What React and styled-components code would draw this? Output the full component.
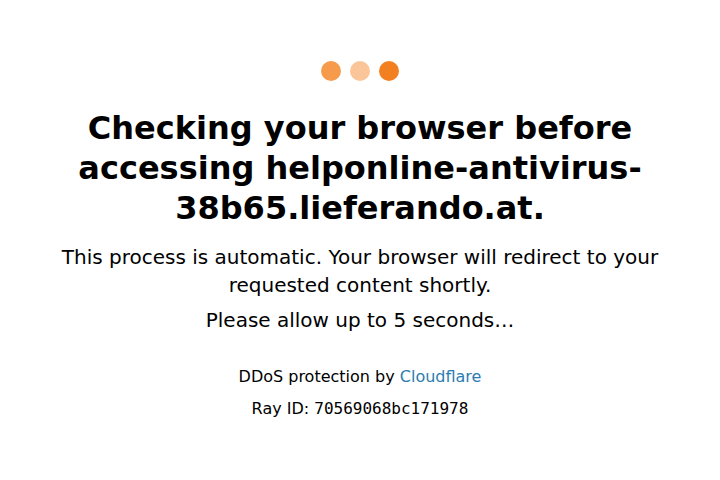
import React from 'react'
import styled, { createGlobalStyle } from 'styled-components'

const GlobalStyle = createGlobalStyle`
  html, body {
    margin: 0;
    padding: 0;
    background: #fff;
    font-family: "DejaVu Sans", sans-serif;
    color: #000;
  }
`

const Page = styled.main`
  width: 720px;
  display: flex;
  flex-direction: column;
  align-items: center;
  text-align: center;
  padding-top: 61px;
`

const Dots = styled.div`
  display: flex;
  gap: 9px;
  margin-bottom: 27px;
`

const Dot = styled.span`
  width: 20px;
  height: 20px;
  border-radius: 50%;
  background: ${p => p.color};
`

const Title = styled.h1`
  margin: 0;
  font-size: 32px;
  line-height: 40px;
  font-weight: bold;
  padding: 0 60px;
`

const Text = styled.p`
  margin: ${p => p.mt || 0}px 0 0;
  font-size: 20px;
  line-height: 28px;
  padding: 0 55px;
`

const Footer = styled.div`
  margin-top: 33px;
  font-size: 16px;
  line-height: 20px;
  display: flex;
  flex-direction: column;
  gap: 12px;
`

const Link = styled.a`
  color: #2c7cb0;
  text-decoration: none;
`

const Code = styled.code`
  font-family: "DejaVu Sans Mono", monospace;
  font-size: 16px;
`

export default function App() {
  return (
    <>
      <GlobalStyle />
      <Page>
        <Dots>
          <Dot color="#f69b4b" />
          <Dot color="#fbc59a" />
          <Dot color="#f38020" />
        </Dots>
        <Title>Checking your browser before accessing helponline-antivirus-38b65.lieferando.at.</Title>
        <Text mt={15}>This process is automatic. Your browser will redirect to your requested content shortly.</Text>
        <Text mt={7}>Please allow up to 5 seconds…</Text>
        <Footer>
          <div>DDoS protection by <Link href="#">Cloudflare</Link></div>
          <div>Ray ID: <Code>70569068bc171978</Code></div>
        </Footer>
      </Page>
    </>
  )
}
